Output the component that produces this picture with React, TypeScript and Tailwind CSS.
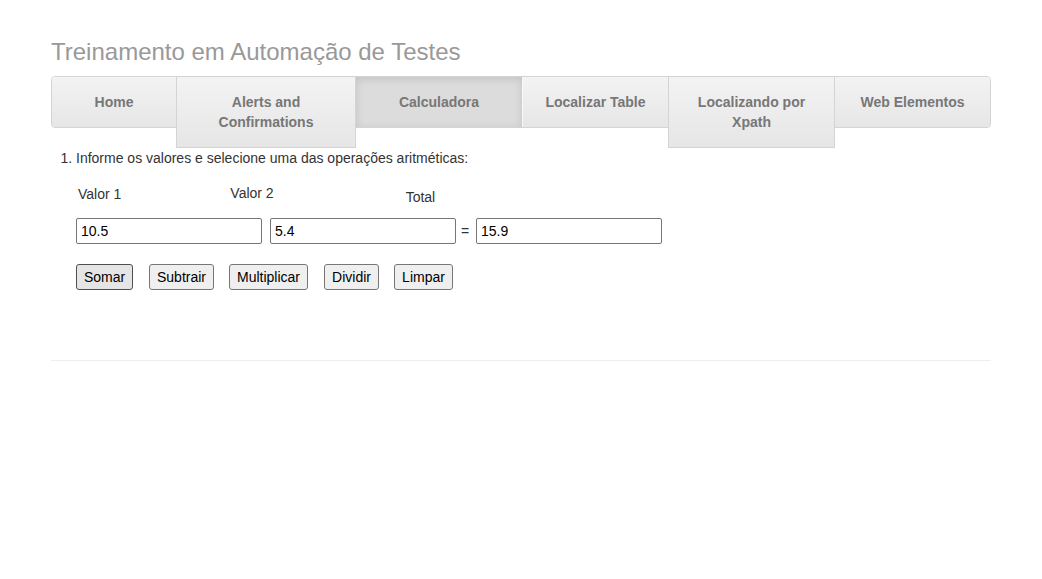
import React from 'react';

type Tab = { label: string[]; width: number; active?: boolean };

const TABS: Tab[] = [
  { label: ['Home'], width: 124 },
  { label: ['Alerts and', 'Confirmations'], width: 180 },
  { label: ['Calculadora'], width: 166, active: true },
  { label: ['Localizar Table'], width: 146 },
  { label: ['Localizando por', 'Xpath'], width: 167 },
  { label: ['Web Elementos'], width: 155 },
];

function NavTab({ t, first, last }: { t: Tab; first: boolean; last: boolean }) {
  const tall = t.label.length > 1;
  const base = 'shrink-0 flex flex-col items-center text-center text-[14px] leading-[20px] font-bold text-[#777] pt-[15px]';
  let look = 'bg-gradient-to-b from-[#f3f3f3] to-[#e6e6e6] h-[50px]';
  if (t.active) look = 'bg-[#dcdcdc] shadow-[inset_0_2px_8px_rgba(0,0,0,0.12)] h-[50px]';
  if (tall) look = 'bg-gradient-to-b from-[#f3f3f3] to-[#e6e6e6] h-[71px] border-x border-b border-[#d4d4d4]';
  const round = first ? 'rounded-l-[3px]' : last ? 'rounded-r-[3px]' : '';
  const sep = t.label[0] === 'Localizar Table' ? 'border-l border-[#f8f8f8]' : '';
  return (
    <div className={`${base} ${look} ${round} ${sep} relative`} style={{ width: t.width }}>
      {t.label.map((l) => (
        <span key={l}>{l}</span>
      ))}
    </div>
  );
}

export default function App() {
  return (
    <div className="min-h-screen bg-white text-[#333] text-[14px] leading-[20px] font-['Liberation_Sans',Arial,sans-serif]">
      <div className="w-[940px] mx-auto pt-[39px]">
        <h3 className="text-[24px] leading-[26px] text-[#999] font-normal mb-[11px]">
          Treinamento em Automação de Testes
        </h3>

        <nav className="flex items-start h-[52px] border border-[#d4d4d4] rounded-[4px] bg-gradient-to-b from-[#f3f3f3] to-[#e6e6e6] mb-[20px]">
          {TABS.map((t, i) => (
            <NavTab key={t.label.join(' ')} t={t} first={i === 0} last={i === TABS.length - 1} />
          ))}
        </nav>

        <ol className="list-decimal pl-[25px]">
          <li>Informe os valores e selecione uma das operações aritméticas:</li>
        </ol>

        <div className="pl-[25px] mt-[16px]">
          <div className="flex items-start h-[24px] text-[#333]">
            <span className="ml-[2px]">Valor 1</span>
            <span className="ml-[109px] -mt-[1px]">Valor 2</span>
            <span className="ml-[132px] mt-[3px]">Total</span>
          </div>

          <div className="flex items-center mt-[10px]">
            <input
              defaultValue="10.5"
              className="w-[186px] h-[26px] border border-[#767676] rounded-[2px] px-[4px] text-[14px] text-black outline-none"
            />
            <input
              defaultValue="5.4"
              className="ml-[8px] w-[186px] h-[26px] border border-[#767676] rounded-[2px] px-[4px] text-[14px] text-black outline-none"
            />
            <span className="w-[20px] text-center -ml-[1px] mr-[1px]">=</span>
            <input
              defaultValue="15.9"
              className="w-[186px] h-[26px] border border-[#767676] rounded-[2px] px-[4px] text-[14px] text-black outline-none"
            />
          </div>

          <div className="flex mt-[20px] text-black">
            <button className="h-[26px] w-[57px] bg-[#e5e5e5] border border-[#4f4f4f] rounded-[3px]">Somar</button>
            <button className="ml-[16px] h-[26px] w-[65px] bg-[#efefef] border border-[#767676] rounded-[3px]">Subtrair</button>
            <button className="ml-[15px] h-[26px] w-[79px] bg-[#efefef] border border-[#767676] rounded-[3px]">Multiplicar</button>
            <button className="ml-[16px] h-[26px] w-[55px] bg-[#efefef] border border-[#767676] rounded-[3px]">Dividir</button>
            <button className="ml-[15px] h-[26px] w-[59px] bg-[#efefef] border border-[#767676] rounded-[3px]">Limpar</button>
          </div>
        </div>

        <hr className="mt-[70px] border-t border-[#eee]" />
      </div>
    </div>
  );
}
